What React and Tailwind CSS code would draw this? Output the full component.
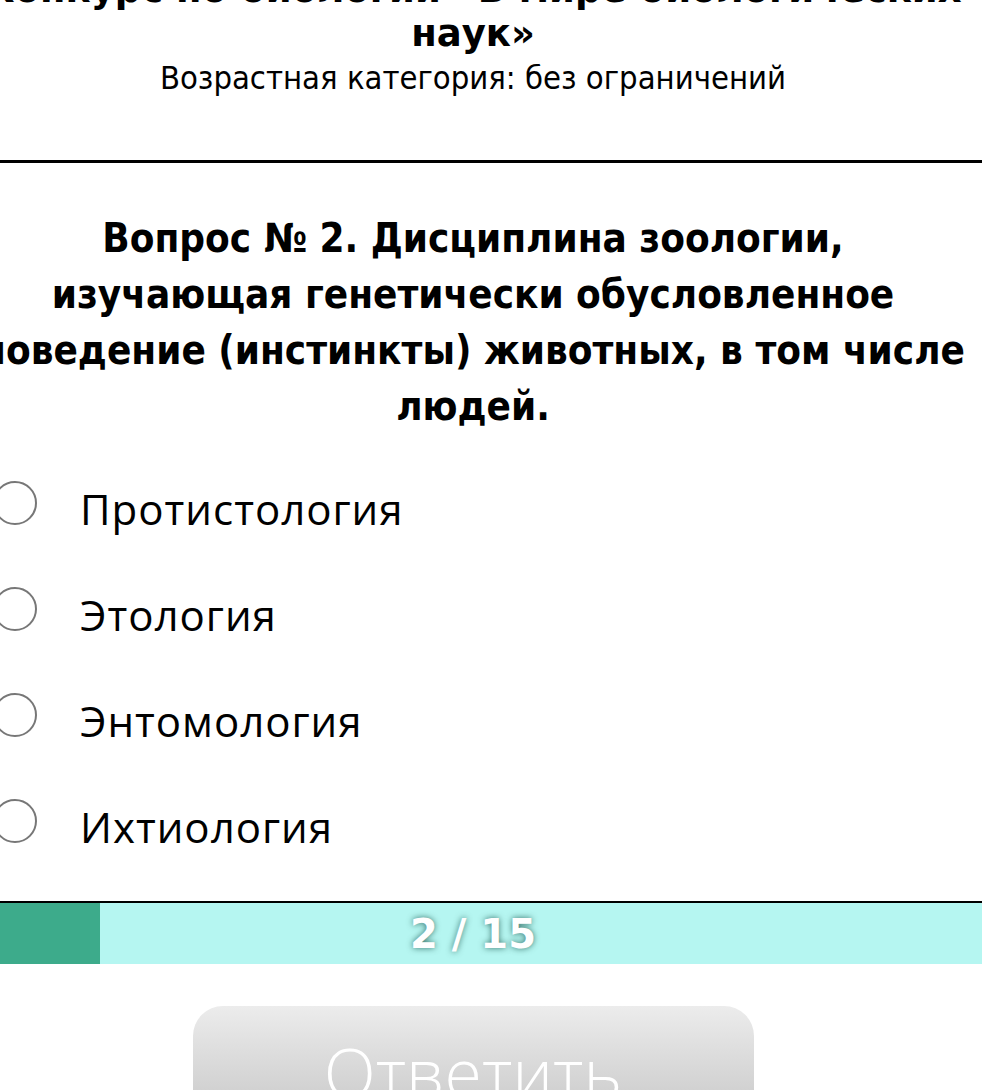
import React, { useState } from 'react';

const answers = ['Протистология', 'Этология', 'Энтомология', 'Ихтиология'];

const Quiz = () => {
  const [selected, setSelected] = useState(null);
  const current = 2;
  const total = 15;

  return (
    <div className="w-full h-[1090px] overflow-hidden bg-white">
      <div className="-ml-[36px] -mt-[32px] w-[1018px]">
        <div className="text-center text-black font-['DejaVu_Sans',sans-serif]">
          <h1 className="text-[37px] leading-[44px] font-bold">
            Конкурс по биологии «В мире биологических
            <br />
            наук»
          </h1>
          <p className="text-[32.5px] leading-[40px] mt-[2px] font-stretch-condensed">Возрастная категория: без ограничений</p>
        </div>

        <hr className="mt-[62px] border-0 border-t-[3px] border-black" />

        <h2 className="mt-[47px] text-center whitespace-nowrap text-[40px] leading-[56px] font-bold text-black font-stretch-condensed font-['DejaVu_Sans',sans-serif]">
          Вопрос № 2. Дисциплина зоологии,
          <br />
          изучающая генетически обусловленное
          <br />
          поведение (инстинкты) животных, в том числе
          <br />
          людей.
        </h2>

        <div className="mt-[21px] flex flex-col">
          {answers.map((a, i) => (
            <label key={a} className="flex items-center h-[106px] cursor-pointer" onClick={() => setSelected(i)}>
              <span className="ml-[29px] w-[44px] h-[44px] rounded-full border-2 border-[#777] flex items-center justify-center -mt-[10px]">
                {selected === i && <span className="w-[24px] h-[24px] rounded-full bg-[#555]" />}
              </span>
              <span className="ml-[43px] text-[42px] tracking-[1px] text-black font-['Open_Sans',sans-serif]">{a}</span>
            </label>
          ))}
        </div>

        <div className="mt-[22px] border-t-[2px] border-black h-[63px] bg-[#b5f6f1] flex relative">
          <div className="h-full bg-[#3dab8b]" style={{ width: `${(current / total) * 100}%` }} />
          <div className="absolute inset-0 flex items-center justify-center text-white font-bold text-[40px] font-['DejaVu_Sans',sans-serif] [text-shadow:0_0_6px_rgba(0,60,50,0.7)]">
            {current} / {total}
          </div>
        </div>

        <div className="flex justify-center mt-[42px]">
          <button className="w-[561px] h-[150px] rounded-[30px] bg-gradient-to-b from-[#ececec] to-[#bdbdbd] flex justify-center items-start pt-[32px] text-white text-[68px] leading-none font-light font-['Open_Sans',sans-serif]">
            Ответить
          </button>
        </div>
      </div>
    </div>
  );
};

export default function App() {
  return <Quiz />;
}
